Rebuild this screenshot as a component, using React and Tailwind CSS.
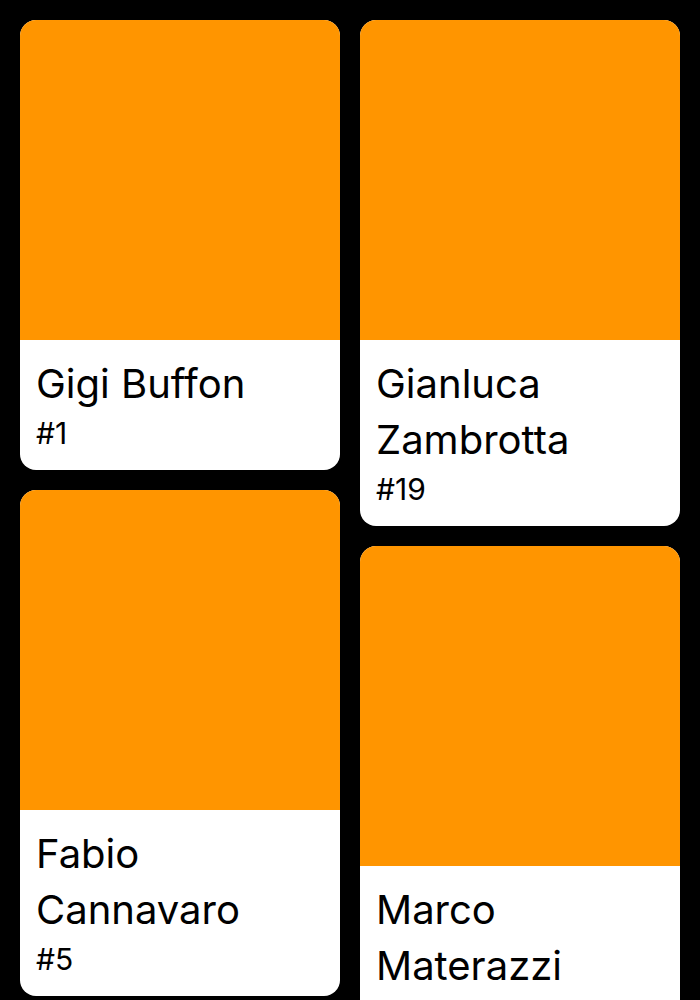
const players = [
  { name: "Gigi Buffon", number: 1 },
  { name: "Gianluca Zambrotta", number: 19 },
  { name: "Fabio Cannavaro", number: 5 },
  { name: "Marco Materazzi", number: 23 },
  { name: "Andrea Pirlo", number: 21 },
  { name: "Francesco Totti", number: 10 },
]

const PlayerCard = ({ player }) => (
  <div className="rounded-2xl overflow-hidden bg-white">
    <div className="h-[320px] bg-[#ff9500]"></div>
    <div className="p-4 text-black">
      <div className="text-[40px] leading-[56px]">{player.name}</div>
      <div className="text-[30px] leading-[42px]">#{player.number}</div>
    </div>
  </div>
)

export default function App() {
  // reparto a due colonne, stile masonry
  const left = players.filter((_, i) => i % 2 === 0)
  const right = players.filter((_, i) => i % 2 === 1)

  return (
    <div
      className="min-h-screen bg-black p-5 flex gap-5 items-start"
      style={{ fontFamily: "Inter, 'Noto Sans', sans-serif" }}
    >
      <div className="flex-1 flex flex-col gap-5">
        {left.map((p) => (
          <PlayerCard key={p.number} player={p} />
        ))}
      </div>
      <div className="flex-1 flex flex-col gap-5">
        {right.map((p) => (
          <PlayerCard key={p.number} player={p} />
        ))}
      </div>
    </div>
  )
}
